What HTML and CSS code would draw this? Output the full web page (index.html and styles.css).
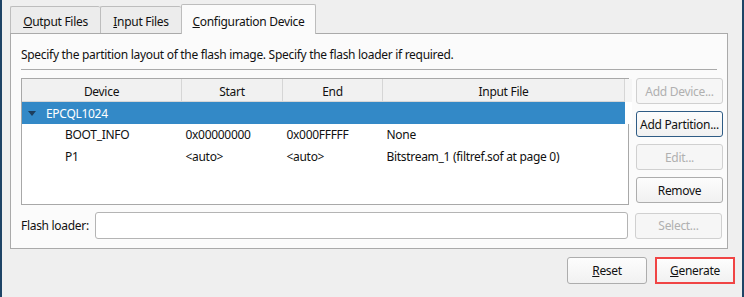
FILE: index.html
```html
<!DOCTYPE html>
<html lang="en">
<head>
    <meta charset="UTF-8">
    <title>Configuration Device</title>
    <link rel="stylesheet" href="styles.css">
</head>
<body>
    <div class="window">
        <div class="tabs">
            <div class="tab"><u>O</u>utput Files</div>
            <div class="tab"><u>I</u>nput Files</div>
            <div class="tab active"><u>C</u>onfiguration Device</div>
        </div>

        <div class="panel">
            <p class="desc">Specify the partition layout of the flash image. Specify the flash loader if required.</p>
            <div class="sep"></div>

            <div class="main">
                <div class="table-box">
                    <table class="devices">
                        <thead>
                            <tr>
                                <th class="c-dev">Device</th>
                                <th class="c-start">Start</th>
                                <th class="c-end">End</th>
                                <th class="c-file">Input File</th>
                                <th class="c-pad"></th>
                            </tr>
                        </thead>
                        <tbody>
                            <tr class="selected">
                                <td class="c-dev"><span class="arrow"></span>EPCQL1024</td>
                                <td></td>
                                <td></td>
                                <td></td>
                                <td class="c-pad"></td>
                            </tr>
                            <tr>
                                <td class="child">BOOT_INFO</td>
                                <td>0x00000000</td>
                                <td>0x000FFFFF</td>
                                <td>None</td>
                                <td></td>
                            </tr>
                            <tr>
                                <td class="child">P1</td>
                                <td>&lt;auto&gt;</td>
                                <td>&lt;auto&gt;</td>
                                <td>Bitstream_1 (filtref.sof at page 0)</td>
                                <td></td>
                            </tr>
                        </tbody>
                    </table>
                </div>

                <div class="side">
                    <button class="btn" disabled>Add Device...</button>
                    <button class="btn focus">Add Partition...</button>
                    <button class="btn" disabled>Edit...</button>
                    <button class="btn">Remove</button>
                </div>
            </div>

            <div class="loader">
                <label for="loaderInput">Flash loader:</label>
                <input type="text" id="loaderInput">
                <button class="btn" disabled>Select...</button>
            </div>
        </div>

        <div class="footer">
            <button class="btn big"><u>R</u>eset</button>
            <button class="btn big generate"><u>G</u>enerate</button>
        </div>
    </div>
</body>
</html>
```

FILE: styles.css
```css
html, body {
    margin: 0;
    height: 100%;
}
body {
    font-family: "Noto Sans", "Open Sans", sans-serif;
    font-size: 12px;
    letter-spacing: -0.3px;
    color: #111;
    background-color: #efefef;
    border-left: 2px solid #1e4466;
    border-right: 2px solid #1e4466;
    box-sizing: border-box;
}
.window {
    padding: 4px 14px 0 8px;
}
.tabs {
    display: flex;
    align-items: flex-end;
    height: 29px;
}
.tab {
    height: 27px;
    line-height: 29px;
    text-align: center;
    white-space: nowrap;
    border: 1px solid #bdbdbd;
    border-bottom: none;
    border-right: none;
    border-radius: 2px 2px 0 0;
    background-color: #ececec;
    box-sizing: border-box;
}
.tab:first-child {
    width: 90px;
}
.tab:nth-child(2) {
    width: 81px;
}
.tab.active {
    width: 135px;
    height: 30px;
    line-height: 33px;
    margin-bottom: -1px;
    border-right: 1px solid #bdbdbd;
    background-color: #fbfbfb;
    position: relative;
    z-index: 1;
}
.panel {
    height: 216px;
    border: 1px solid #aaa;
    background-color: #fbfbfb;
    box-sizing: border-box;
    padding: 0 5px 0 10px;
}
.desc {
    margin: 0;
    height: 35px;
    line-height: 41px;
    white-space: nowrap;
}
.sep {
    height: 1px;
    background-color: #aaa;
    margin: 0 5px 8px 0;
}
.main {
    display: flex;
    gap: 7px;
}
.table-box {
    flex: none;
    width: 608px;
    height: 127px;
    border: 1px solid #a8a8a8;
    background-color: #fff;
    box-sizing: border-box;
}
.devices {
    border-collapse: collapse;
    table-layout: fixed;
    width: 606px;
}
.devices th {
    height: 20px;
    padding: 2px 0 0;
    font-weight: normal;
    background-color: #f1f1f1;
    border-right: 1px solid #d6d6d6;
    border-bottom: 1px solid #d6d6d6;
    text-align: center;
}
.devices th.c-pad {
    border-right: none;
    border-bottom: none;
    background-color: #f5f5f5;
}
.c-dev { width: 159px; }
.c-start { width: 100px; }
.c-end { width: 99px; }
.c-file { width: 241px; }
.c-pad { width: 7px; }
.devices td {
    height: 22px;
    padding: 0 0 0 4px;
    white-space: nowrap;
    overflow: hidden;
}
.devices tbody tr:nth-child(2) td {
    height: 21px;
}
.devices tr.selected td {
    background-color: #3389c7;
    color: #fff;
    height: 22px;
}
.devices tr.selected td.c-pad {
    background-color: #fff;
}
.devices td.child {
    padding-left: 43px;
}
.arrow {
    display: inline-block;
    width: 0;
    height: 0;
    border-left: 4px solid transparent;
    border-right: 4px solid transparent;
    border-top: 5px solid #1d3e5c;
    margin: 0 10px 1px 2px;
    vertical-align: middle;
}
.side {
    display: flex;
    flex-direction: column;
    gap: 7px;
}
.btn {
    flex: none;
    font-family: inherit;
    font-size: 12px;
    letter-spacing: -0.3px;
    color: #111;
    width: 87px;
    height: 26px;
    padding: 0;
    border: 1px solid #adadad;
    border-radius: 3px;
    background: linear-gradient(#fdfdfd, #f1f1f1);
    box-sizing: border-box;
}
.btn:disabled {
    color: #b0b0b0;
    border-color: #d0d0d0;
    background: #f6f6f6;
}
.btn.focus {
    border-color: #2f5c85;
}
.loader {
    display: flex;
    align-items: center;
    gap: 7px;
    margin-top: 7px;
}
.loader label {
    width: 67px;
    white-space: nowrap;
}
.loader input {
    width: 534px;
    height: 27px;
    border: 1px solid #b4b4b4;
    border-radius: 3px;
    background-color: #fff;
    box-sizing: border-box;
    margin: 0;
}
.footer {
    display: flex;
    justify-content: flex-end;
    gap: 8px;
    margin-top: 8px;
    margin-right: -7px;
}
.btn.big {
    width: 80px;
    height: 27px;
}
.btn.generate {
    border: 2px solid #f04444;
    border-radius: 0;
}
```
